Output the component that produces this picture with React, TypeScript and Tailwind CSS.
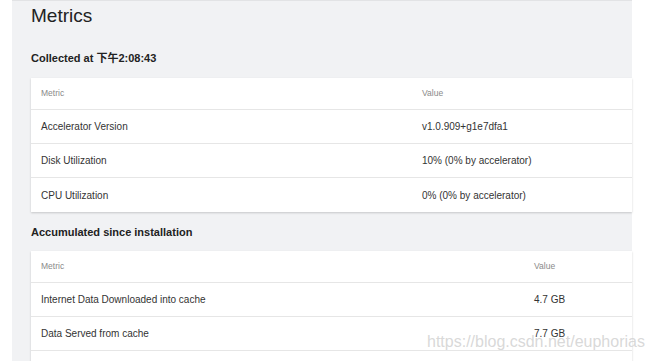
import React from 'react';

interface Row {
  name: string;
  value: string;
}

const collected: Row[] = [
  { name: 'Accelerator Version', value: 'v1.0.909+g1e7dfa1' },
  { name: 'Disk Utilization', value: '10% (0% by accelerator)' },
  { name: 'CPU Utilization', value: '0% (0% by accelerator)' },
];

// third row is cut off by the bottom of the window
const accumulated: Row[] = [
  { name: 'Internet Data Downloaded into cache', value: '4.7 GB' },
  { name: 'Data Served from cache', value: '7.7 GB' },
  { name: '', value: '' },
];

const MetricTable: React.FC<{ rows: Row[]; valueCol: string }> = ({ rows, valueCol }) => (
  <div className="bg-white shadow-[0_1px_2px_rgba(0,0,0,0.18)]">
    <div className="flex h-[32px] items-center border-b border-[#e6e6e6] text-[8.5px] text-[#8a8a8a]">
      <div className={`${valueCol} shrink-0 pl-[10px]`}>Metric</div>
      <div>Value</div>
    </div>
    {rows.map((row, i) => (
      <div
        key={i}
        className={`flex h-[34px] items-center text-[10px] text-[#333] ${
          i < rows.length - 1 ? 'border-b border-[#e6e6e6]' : ''
        }`}
      >
        <div className={`${valueCol} shrink-0 pl-[10px]`}>{row.name}</div>
        <div>{row.value}</div>
      </div>
    ))}
  </div>
);

const App: React.FC = () => {
  return (
    <div
      className="relative h-[361px] overflow-hidden bg-white"
      style={{ fontFamily: '"Liberation Sans", "Noto Sans CJK SC", Arial, sans-serif' }}
    >
      <div className="ml-[12px] h-full w-[620px] border-t border-[#e2e3e5] bg-[#f1f2f4] pl-[19px]">
        <h1 className="mt-[3px] h-[24px] text-[19px] leading-[24px] text-[#222]">Metrics</h1>
        <h2 className="mt-[22px] mb-[12px] h-[16px] text-[11px] font-bold leading-[16px] text-[#222]">
          Collected at 下午2:08:43
        </h2>
        <MetricTable rows={collected} valueCol="w-[391px]" />
        <h2 className="mt-[12px] mb-[11px] h-[16px] text-[11px] font-bold leading-[16px] text-[#222]">
          Accumulated since installation
        </h2>
        <MetricTable rows={accumulated} valueCol="w-[503px]" />
      </div>
      <div className="absolute left-[427px] top-[334px] text-[16px] leading-[16px] text-[#d4d4d4]/90">
        https://blog.csdn.net/euphorias
      </div>
    </div>
  );
};

export default App;
